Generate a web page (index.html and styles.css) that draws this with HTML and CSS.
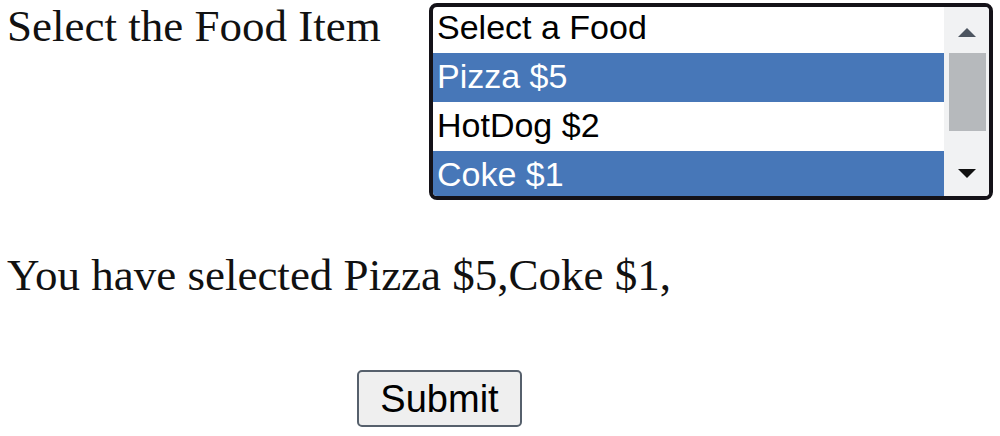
FILE: index.html
```html
<!DOCTYPE html>
<html lang="en">
<head>
<meta charset="utf-8">
<title>Food</title>
<link rel="stylesheet" href="styles.css">
</head>
<body>
<form class="page">
  <div class="row">
    <label class="label">Select the Food Item</label>
    <div class="listbox">
      <div class="options">
        <div class="option">Select a Food</div>
        <div class="option selected">Pizza $5</div>
        <div class="option">HotDog $2</div>
        <div class="option selected">Coke $1</div>
      </div>
      <div class="scrollbar">
        <div class="arrow up"></div>
        <div class="track"><div class="thumb"></div></div>
        <div class="arrow down"></div>
      </div>
    </div>
  </div>
  <p class="result">You have selected Pizza $5,Coke $1,</p>
  <button type="button" class="submit">Submit</button>
</form>
</body>
</html>
```

FILE: styles.css
```css
html, body {
  margin: 0;
  padding: 0;
  background: #ffffff;
}

.page {
  width: 1000px;
  height: 436px;
  overflow: hidden;
  display: flex;
  flex-direction: column;
  align-items: flex-start;
  padding-top: 3px;
  box-sizing: border-box;
}

.row {
  display: flex;
  align-items: flex-start;
}

.label {
  font-family: "Liberation Serif", "Times New Roman", serif;
  font-size: 45px;
  line-height: 45px;
  color: #111;
  margin: 1px 0 0 7px;
  width: 422px;
}

.listbox {
  width: 564px;
  height: 197px;
  box-sizing: border-box;
  border: 4px solid #141218;
  border-radius: 8px;
  background: #fff;
  display: flex;
  overflow: hidden;
}

.options {
  flex: 1;
  overflow: hidden;
}

.option {
  font-family: "Liberation Sans", Arial, sans-serif;
  font-size: 34px;
  line-height: 41px;
  height: 49px;
  box-sizing: border-box;
  padding: 3px 0 5px 4px;
  color: #000;
  white-space: nowrap;
}

.option:first-child {
  margin-top: -3px;
}

.option.selected {
  background: #4777b8;
  color: #fff;
}

.scrollbar {
  width: 45px;
  background: #f1f2f3;
  display: flex;
  flex-direction: column;
  align-items: center;
}

.arrow {
  width: 0;
  height: 0;
  border-left: 9px solid transparent;
  border-right: 9px solid transparent;
}

.arrow.up {
  border-bottom: 9px solid #4d5560;
  margin-top: 21px;
}

.arrow.down {
  border-top: 9px solid #111;
  margin-bottom: 18px;
}

.track {
  flex: 1;
  width: 100%;
  padding: 16px 3px 0 5px;
  box-sizing: border-box;
}

.thumb {
  height: 78px;
  background: #b6b9bc;
}

.result {
  font-family: "Liberation Serif", "Times New Roman", serif;
  font-size: 45px;
  line-height: 45px;
  color: #111;
  margin: 53px 0 0 7px;
}

.submit {
  margin: 72px 0 0 357px;
  width: 165px;
  height: 57px;
  box-sizing: border-box;
  border: 2px solid #56606c;
  border-radius: 5px;
  background: #efefef;
  font-family: "Liberation Sans", Arial, sans-serif;
  font-size: 38px;
  line-height: 38px;
  padding: 8px 0 7px 0;
  color: #000;
  text-align: center;
}
```
